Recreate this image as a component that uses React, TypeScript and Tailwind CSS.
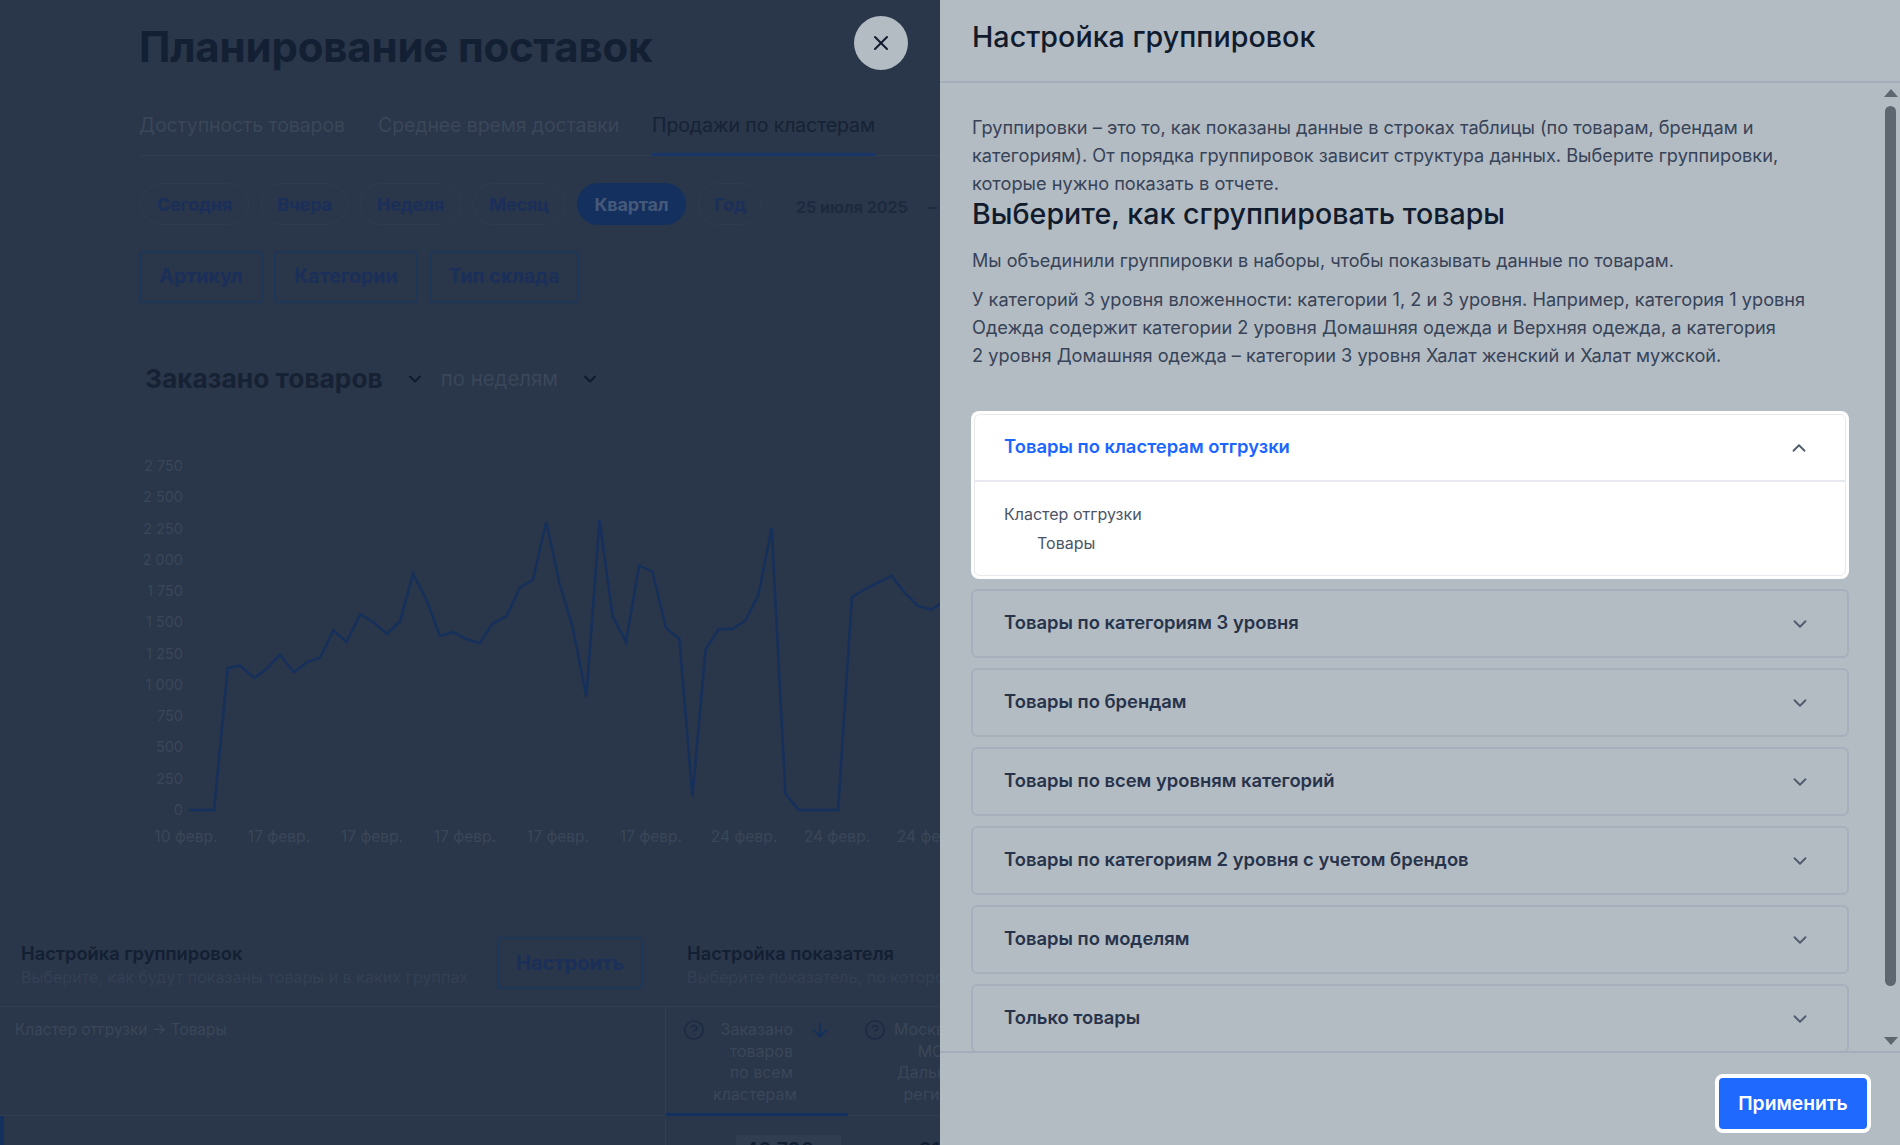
import { ChevronDown, ChevronUp, X, ArrowDown, CircleHelp } from 'lucide-react';

const font = { fontFamily: 'Inter, "Noto Sans", sans-serif' };

const periods = [
  { label: 'Сегодня', width: 'w-[109px]' },
  { label: 'Вчера', width: 'w-[87px]' },
  { label: 'Неделя', width: 'w-[101px]' },
  { label: 'Месяц', width: 'w-[92px]' },
  { label: 'Квартал', width: 'w-[109px]', active: true },
  { label: 'Год', width: 'w-[64px]' },
];

const filters = [
  { label: 'Артикул', width: 'w-[124px]' },
  { label: 'Категории', width: 'w-[144px]' },
  { label: 'Тип склада', width: 'w-[150px]' },
];

const groups = [
  'Товары по категориям 3 уровня',
  'Товары по брендам',
  'Товары по всем уровням категорий',
  'Товары по категориям 2 уровня с учетом брендов',
  'Товары по моделям',
  'Только товары',
];

const yLabels = ['2 750', '2 500', '2 250', '2 000', '1 750', '1 500', '1 250', '1 000', '750', '500', '250', '0'];
const xLabels = ['10 февр.', '17 февр.', '17 февр.', '17 февр.', '17 февр.', '17 февр.', '24 февр.', '24 февр.', '24 февр.'];

// traced from the reference, in crop coordinates (x / 1.668, y / 3)
const trace = [
  [315, 1230], [357, 1230], [380, 804], [401, 797], [424, 834], [445, 806], [467, 764], [490, 817], [512, 786],
  [534, 773], [556, 691], [578, 726], [601, 643], [623, 667], [645, 701], [667, 665], [689, 522], [712, 603],
  [734, 708], [756, 696], [778, 717], [800, 730], [822, 670], [845, 648], [867, 563], [889, 539], [911, 365],
  [933, 550], [955, 680], [978, 890], [1000, 360], [1022, 650], [1044, 725], [1066, 497], [1088, 514], [1111, 685],
  [1133, 717], [1155, 1190], [1177, 748], [1199, 687], [1221, 687], [1243, 662], [1265, 585], [1287, 385],
  [1310, 1182], [1332, 1230], [1354, 1230], [1376, 1230], [1398, 1230], [1421, 592], [1443, 567], [1465, 548],
  [1487, 527], [1509, 579], [1531, 618], [1553, 629], [1568, 612],
];
const points = trace.map(([x, y]) => `${(x / 1.668).toFixed(1)},${(y / 3).toFixed(1)}`).join(' ');

function Chart() {
  return (
    <svg width="940" height="460" className="mt-px block shrink-0" style={{ fontFamily: 'Inter, sans-serif' }}>
      {yLabels.map((label, i) => (
        <text key={label} x="183" y={71 + i * 31.27} textAnchor="end" fontSize="14.5" fill="#3a4759">
          {label}
        </text>
      ))}
      {xLabels.map((label, i) => (
        <text key={i} x={186 + i * 93} y="442" textAnchor="middle" fontSize="15.6" fill="#3a4759">
          {label}
        </text>
      ))}
      <polyline points={points} fill="none" stroke="#16305c" strokeWidth="2.5" strokeLinejoin="miter" />
    </svg>
  );
}

function PageBehind() {
  return (
    <div className="w-[940px] h-[1145px] shrink-0 overflow-hidden bg-[#2a3649] flex flex-col relative">
      <div className="pl-[139px] flex flex-col">
        <h1 className="mt-[19px] text-[42px] leading-[56px] font-bold text-[#131f33] tracking-[-0.2px]">
          Планирование поставок
        </h1>

        <div className="mt-[30px] h-[51px] flex gap-8 border-b border-[#313d50] text-[19.5px] tracking-[-0.1px] leading-[40px] whitespace-nowrap">
          <div className="text-[#3b4759] w-[207px]">Доступность товаров</div>
          <div className="text-[#3b4759] w-[242px]">Среднее время доставки</div>
          <div className="text-[#162235] w-[223px] h-[51px] border-b-[3px] border-[#17376b]">Продажи по кластерам</div>
        </div>

        <div className="mt-[27px] ml-px h-[42px] flex items-center gap-3 whitespace-nowrap">
          {periods.map((p) => (
            <div
              key={p.label}
              className={
                p.active
                  ? `${p.width} h-[42px] rounded-full bg-[#14305e] text-[#46597a] text-[18px] font-bold tracking-[-0.2px] flex items-center justify-center`
                  : `${p.width} h-[42px] rounded-full border border-[#2f3b4e] text-[#1a2f5a] text-[18px] font-bold tracking-[-0.2px] flex items-center justify-center`
              }
            >
              {p.label}
            </div>
          ))}
          <div className="ml-[22px] mt-[6px] text-[#1c2a40] text-[16px] font-bold">25 июля 2025</div>
          <div className="ml-[9px] mt-[6px] text-[#1c2a40] text-[16px] font-bold">–</div>
        </div>

        <div className="mt-[26px] flex gap-[11px] whitespace-nowrap">
          {filters.map((f) => (
            <div
              key={f.label}
              className={`${f.width} h-[52px] rounded-[4px] border-2 border-[#1e3658] text-[#1a2f5a] text-[19.5px] font-bold flex items-center justify-center`}
            >
              {f.label}
            </div>
          ))}
        </div>

        <div className="mt-[56px] h-[40px] pl-[6px] flex items-center whitespace-nowrap">
          <span className="text-[26.3px] font-bold text-[#162234]">Заказано товаров</span>
          <ChevronDown className="ml-[22px] text-[#101c2e]" size={20} strokeWidth={2.5} />
          <span className="ml-[16px] text-[20.4px] text-[#3b4759]">по неделям</span>
          <ChevronDown className="ml-[22px] text-[#101c2e]" size={20} strokeWidth={2.5} />
        </div>
      </div>

      <Chart />

      <div className="mt-[77px] h-[52px] flex whitespace-nowrap">
        <div className="pl-[21px] w-[497px] shrink-0 pt-[4px]">
          <div className="text-[18.3px] leading-[24px] font-semibold text-[#131f33]">Настройка группировок</div>
          <div className="text-[16.1px] leading-[24px] text-[#344053]">Выберите, как будут показаны товары и в каких группах</div>
        </div>
        <div className="w-[146px] h-[52px] shrink-0 rounded-[4px] border-2 border-[#1e3658] text-[#1a2f5a] text-[20px] font-bold flex items-center justify-center">
          Настроить
        </div>
        <div className="ml-[44px] pt-[4px]">
          <div className="text-[18.3px] leading-[24px] font-semibold text-[#131f33]">Настройка показателя</div>
          <div className="text-[16.1px] leading-[24px] text-[#344053]">Выберите показатель, по которому</div>
        </div>
      </div>

      <div className="mt-[17px] h-[110px] border-y border-[#313d50] flex shrink-0">
        <div className="w-[665px] shrink-0 pl-[15px] pt-[11px] text-[15.4px] leading-[24px] text-[#3a4759] whitespace-nowrap">
          Кластер отгрузки → Товары
        </div>
        <div className="w-[183px] shrink-0 h-[109px] border-l border-b-[3px] border-l-[#313d50] border-b-[#14305e] flex pt-[12px] pl-[17px]">
          <CircleHelp className="text-[#1a2a44] shrink-0" size={22} strokeWidth={1.5} />
          <div className="ml-[8px] w-[80px] text-right text-[16px] leading-[21.5px] text-[#3a4759]">Заказано товаров по всем кластерам</div>
          <ArrowDown className="ml-[16px] text-[#14305e] shrink-0" size={22} strokeWidth={2} />
        </div>
        <div className="flex-1 flex pt-[12px] pl-[16px] overflow-hidden">
          <CircleHelp className="text-[#1a2a44] shrink-0" size={22} strokeWidth={1.5} />
          <div className="ml-[7px] w-[76px] shrink-0 text-center text-[16px] leading-[21.5px] text-[#3a4759]">
            Москва и
            <br />
            МО
            <br />
            Дальний
            <br />
            регион
          </div>
        </div>
      </div>

      <div className="flex-1 flex">
        <div className="w-[4px] bg-[#14305e]" />
        <div className="ml-[661px] border-l border-[#313d50] w-[183px] relative">
          <div className="absolute left-[70px] top-[19px] w-[105px] h-[20px] bg-[#303c50]" />
          <div className="absolute left-[79px] top-[22px] text-[20px] leading-[24px] font-semibold text-[#131f33]">40 796</div>
        </div>
        <div className="pl-[72px] pt-[22px] text-[20px] leading-[24px] font-semibold text-[#131f33]">31</div>
      </div>
    </div>
  );
}

function GroupRow({ title }: { title: string }) {
  return (
    <div className="mt-[10px] h-[69px] shrink-0 rounded-[6px] border-2 border-[#a6b0bc] pl-[31px] pr-[36px] pb-[2px] flex items-center justify-between">
      <span className="text-[18.4px] font-semibold text-[#27334a]">{title}</span>
      <ChevronDown className="text-[#4f5b6d] mt-[2px]" size={22} strokeWidth={2} />
    </div>
  );
}

function SidePanel() {
  return (
    <div className="flex-1 h-[1145px] bg-[#b3bbc3] flex flex-col relative">
      <div className="h-[83px] shrink-0 border-b-2 border-[#a4aeba] pl-[32px] pt-[15px]">
        <h2 className="text-[28.7px] leading-[44px] font-medium text-[#101b2d]">Настройка группировок</h2>
      </div>

      <div className="flex-1 min-h-0 flex">
        <div className="flex-1 min-h-0 overflow-hidden pl-[32px] pr-[32px] pt-[30px]">
          <p className="text-[18.2px] leading-[28px] text-[#374357]">
            Группировки – это то, как показаны данные в строках таблицы (по товарам, брендам и
            <br />
            категориям). От порядка группировок зависит структура данных. Выберите группировки,
            <br />
            которые нужно показать в отчете.
          </p>
          <h3 className="mt-px text-[28.6px] leading-[32px] font-medium text-[#101b2d]">Выберите, как сгруппировать товары</h3>
          <p className="mt-[17px] text-[18.05px] leading-[28px] text-[#374357]">
            Мы объединили группировки в наборы, чтобы показывать данные по товарам.
          </p>
          <p className="mt-[10px] text-[18.2px] leading-[28px] text-[#374357]">
            У категорий 3 уровня вложенности: категории 1, 2 и 3 уровня. Например, категория 1 уровня
            <br />
            Одежда содержит категории 2 уровня Домашняя одежда и Верхняя одежда, а категория
            <br />2 уровня Домашняя одежда – категории 3 уровня Халат женский и Халат мужской.
          </p>

          <div className="mt-[42px] -ml-px flex flex-col">
            <div className="h-[168px] shrink-0 rounded-[8px] bg-white p-[3px]">
              <div className="h-full rounded-[6px] border border-[#e6e9ee]">
                <div className="h-[67px] border-b-2 border-[#e6e9ee] pl-[29px] pr-[35px] pb-[2px] flex items-center justify-between">
                  <span className="text-[18.4px] font-semibold text-[#1a66ff]">Товары по кластерам отгрузки</span>
                  <ChevronUp className="text-[#4f5b6d] mt-[2px]" size={22} strokeWidth={2} />
                </div>
                <div className="pl-[29px] pt-[18px] text-[16px] leading-[29px] text-[#4a5567]">
                  <div>Кластер отгрузки</div>
                  <div className="pl-[33px]">Товары</div>
                </div>
              </div>
            </div>
            {groups.map((g) => (
              <GroupRow key={g} title={g} />
            ))}
          </div>
        </div>

        <div className="w-[19px] shrink-0 flex flex-col items-center pt-[6px] pb-[6px]">
          <div className="w-0 h-0 border-x-[7px] border-x-transparent border-b-[8px] border-b-[#5e6670]" />
          <div className="mt-[9px] w-[11px] h-[880px] rounded-full bg-[#5e6670]" />
          <div className="mt-auto w-0 h-0 border-x-[7px] border-x-transparent border-t-[8px] border-t-[#5e6670]" />
        </div>
      </div>

      <div className="h-[94px] shrink-0 border-t-2 border-[#a4aeba] flex justify-end pt-[21px] pr-[29px]">
        <button className="w-[156px] h-[59px] rounded-[8px] border-4 border-white bg-[#1f69ff] text-white text-[19.3px] font-semibold">
          Применить
        </button>
      </div>

      <button className="absolute left-[-86px] top-[16px] w-[54px] h-[54px] rounded-full bg-[#b3bbc3] flex items-center justify-center text-[#101b2d]">
        <X size={24} strokeWidth={2} />
      </button>
    </div>
  );
}

export default function App() {
  return (
    <div className="w-[1900px] h-[1145px] overflow-hidden flex" style={font}>
      <PageBehind />
      <SidePanel />
    </div>
  );
}
